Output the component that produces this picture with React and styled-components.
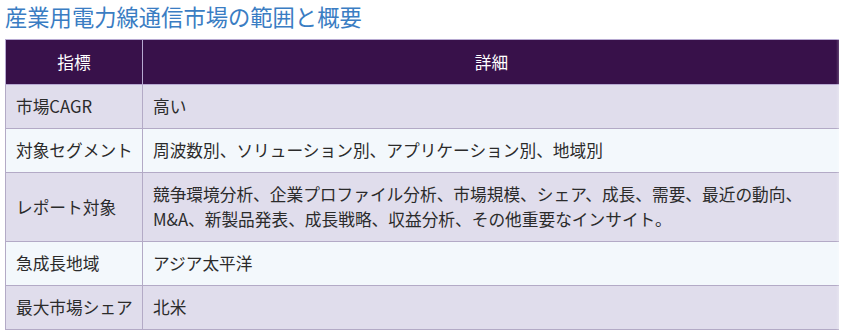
import React from "react";
import styled, { createGlobalStyle } from "styled-components";

const Global = createGlobalStyle`
  html, body { margin: 0; padding: 0; background: #fff; }
  body {
    font-family: "Noto Sans CJK JP", "Noto Sans", sans-serif;
    color: #333;
  }
`;

const Page = styled.div`
  padding: 0 0 0 5px;
  width: 839px;
  box-sizing: border-box;
  overflow: hidden;
`;

const Title = styled.h2`
  margin: 0;
  padding-top: 1px;
  height: 38px;
  font-size: 22.3px;
  line-height: 30px;
  font-weight: 400;
  color: #3a7dc3;
  letter-spacing: 0;
`;

const Wrap = styled.div`
  position: relative;
  width: 836px;
  &::after {
    content: "";
    position: absolute;
    top: 0;
    right: -3px;
    width: 8px;
    height: 100%;
    background: linear-gradient(to right, rgba(255,255,255,0), rgba(255,255,255,0.55));
    pointer-events: none;
  }
`;

const Table = styled.table`
  width: 836px;
  border-collapse: collapse;
  font-size: 16.7px;
  line-height: 25px;
  table-layout: fixed;
`;

const Th = styled.th`
  background: #38114a;
  color: #fff;
  font-weight: 400;
  height: 45px;
  padding: 0 10px;
  border: 1px solid #b7a9d1;
  text-align: center;
  box-sizing: border-box;
  width: ${(p) => p.$w || "auto"};
`;

const Row = styled.tr`
  background: ${(p) => (p.$odd ? "#e0ddec" : "#f3f8fc")};
`;

const Td = styled.td`
  border: 1px solid #b3aac6;
  padding: 9px ${(p) => (p.$key ? "4px" : "10px")} 9px 10px;
  vertical-align: middle;
  color: #2b2b2b;
  box-sizing: border-box;
  height: 44px;
  white-space: ${(p) => (p.$key ? "nowrap" : "normal")};
`;

const rows = [
  ["市場CAGR", "高い"],
  ["対象セグメント", "周波数別、ソリューション別、アプリケーション別、地域別"],
  [
    "レポート対象",
    "競争環境分析、企業プロファイル分析、市場規模、シェア、成長、需要、最近の動向、M&A、新製品発表、成長戦略、収益分析、その他重要なインサイト。",
  ],
  ["急成長地域", "アジア太平洋"],
  ["最大市場シェア", "北米"],
];

export default function App() {
  return (
    <>
      <Global />
      <Page>
        <Title>産業用電力線通信市場の範囲と概要</Title>
        <Wrap>
          <Table>
            <thead>
              <tr>
                <Th $w="137px">指標</Th>
                <Th>詳細</Th>
              </tr>
            </thead>
            <tbody>
              {rows.map(([k, v], i) => (
                <Row key={k} $odd={i % 2 === 0}>
                  <Td $key>{k}</Td>
                  <Td>{v}</Td>
                </Row>
              ))}
            </tbody>
          </Table>
        </Wrap>
      </Page>
    </>
  );
}
